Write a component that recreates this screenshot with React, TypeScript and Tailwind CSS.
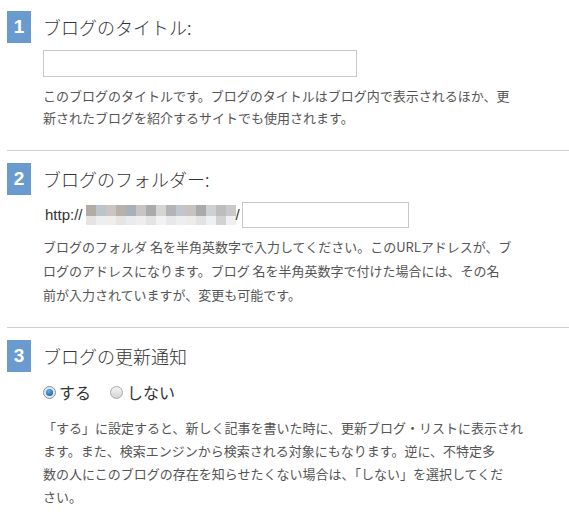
import React from "react";

const font = { fontFamily: '"Noto Sans CJK JP", "Noto Sans", sans-serif' };

const Badge = ({ n }: { n: string }) => (
	<div
		className="flex h-[32px] w-[24px] shrink-0 items-center justify-center bg-[#6a9bcf] text-[19px] font-bold text-white"
		style={{ fontFamily: '"Liberation Sans", Arial, sans-serif' }}
	>
		{n}
	</div>
);

const Title = ({ children }: { children: React.ReactNode }) => (
	<h2 className="h-[32px] text-[18px] font-light leading-[32px] text-[#333]">{children}</h2>
);

const topRow = [
	"#b3aba6", "#bcc3ca", "#c9c6c2", "#b6b1ad", "#a9b0b7", "#c6c5c4", "#ababab", "#d3d6d3",
	"#b6b2ba", "#c2c6cc", "#c7c2be", "#aaaaaa", "#cdd1d4", "#bdbdbd", "#c9c9c9",
];
const bottomRow = [
	"#e6e4e3", "#eceef0", "#efeeed", "#e7e5e4", "#e9ebee", "#eeeeee", "#e4e4e4", "#f1f2f1",
	"#e8e7ea", "#eceef0", "#eeecea", "#e3e3e3", "#eff0f1", "#d2d2d2", "#f0f0f0",
];

const Mosaic = () => (
	<div className="flex h-[20px] flex-col">
		<div className="flex h-[11px]">
			{topRow.map((c, i) => (
				<div key={i} className="h-full w-[10px]" style={{ backgroundColor: c }} />
			))}
		</div>
		<div className="flex h-[9px]">
			{bottomRow.map((c, i) => (
				<div key={i} className="h-full w-[10px]" style={{ backgroundColor: c }} />
			))}
		</div>
	</div>
);

const Radio = ({ checked }: { checked?: boolean }) => (
	<span
		className={`flex h-[13px] w-[13px] items-center justify-center rounded-full border ${
			checked ? "border-[#8a8f96] bg-[#e4e8ee]" : "border-[#a9a9a9] bg-[linear-gradient(#f4f4f4,#d4d4d4)]"
		}`}
	>
		{checked && <span className="h-[7px] w-[7px] rounded-full bg-[radial-gradient(circle_at_40%_35%,#5fb0ea,#0f4f8f)]" />}
	</span>
);

export default function App() {
	return (
		<div className="w-[569px] bg-white pl-[7px]" style={font}>
			{/* 1 */}
			<section className="flex border-b border-[#cfcfcf] pb-[21px] pt-[11px]">
				<Badge n="1" />
				<div className="ml-3 flex flex-col">
					<Title>ブログのタイトル:</Title>
					<div className="mt-[7px] h-[27px] w-[314px] border border-[#c8c8c8] bg-white" />
					<p className="mt-[8px] text-[13px] leading-[22px] text-[#555]">
						このブログのタイトルです。ブログのタイトルはブログ内で表示されるほか、更
						<br />
						新されたブログを紹介するサイトでも使用されます。
					</p>
				</div>
			</section>

			{/* 2 */}
			<section className="flex border-b border-[#cfcfcf] pb-[20px] pt-[12px]">
				<Badge n="2" />
				<div className="ml-3 flex flex-col">
					<Title>ブログのフォルダー:</Title>
					<div className="mt-[7px] flex h-[26px] items-center text-[15px] text-[#333]">
						<span className="ml-[2px]" style={{ fontFamily: '"Liberation Sans", Arial, sans-serif' }}>
							http://
						</span>
						<span className="ml-[3px]">
							<Mosaic />
						</span>
						<span style={{ fontFamily: '"Liberation Sans", Arial, sans-serif' }}>/</span>
						<div className="ml-[2px] h-[26px] w-[167px] border border-[#c8c8c8] bg-white" />
					</div>
					<p className="mt-[7px] text-[13px] leading-[24px] text-[#555]">
						ブログのフォルダ 名を半角英数字で入力してください。このURLアドレスが、ブ
						<br />
						ログのアドレスになります。ブログ 名を半角英数字で付けた場合には、その名
						<br />
						前が入力されていますが、変更も可能です。
					</p>
				</div>
			</section>

			{/* 3 */}
			<section className="flex pb-[6px] pt-[12px]">
				<Badge n="3" />
				<div className="ml-3 flex flex-col">
					<Title>ブログの更新通知</Title>
					<div className="mt-[9px] flex h-[22px] items-center text-[16px] text-[#333]">
						<Radio checked />
						<span className="ml-[3px]">する</span>
						<span className="ml-[19px]">
							<Radio />
						</span>
						<span className="ml-[4px]">しない</span>
					</div>
					<p className="mt-[13px] text-[13px] leading-[23px] text-[#555]">
						「する」に設定すると、新しく記事を書いた時に、更新ブログ・リストに表示され
						<br />
						ます。また、検索エンジンから検索される対象にもなります。逆に、不特定多
						<br />
						数の人にこのブログの存在を知らせたくない場合は、「しない」を選択してくだ
						<br />
						さい。
					</p>
				</div>
			</section>
		</div>
	);
}
